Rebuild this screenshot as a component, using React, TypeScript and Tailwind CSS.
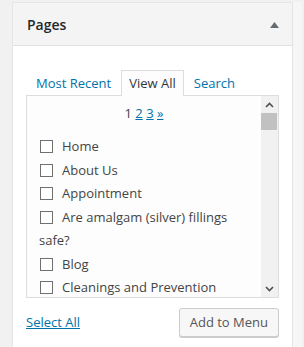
import React from 'react';

const pages = [
  'Home',
  'About Us',
  'Appointment',
  'Are amalgam (silver) fillings safe?',
  'Blog',
  'Cleanings and Prevention',
];

function ChevronUp() {
  return (
    <svg width="9" height="6" viewBox="0 0 9 6" fill="none">
      <path d="M1 5 L4.5 1.5 L8 5" stroke="#505050" strokeWidth="1.6" />
    </svg>
  );
}

function ChevronDown() {
  return (
    <svg width="9" height="6" viewBox="0 0 9 6" fill="none">
      <path d="M1 1 L4.5 4.5 L8 1" stroke="#505050" strokeWidth="1.6" />
    </svg>
  );
}

export default function App() {
  return (
    <div
      className="flex min-h-[347px] w-[304px] overflow-hidden bg-[#f1f1f1] pt-[2px] pl-[12px] text-[13px] text-[#444]"
      style={{ fontFamily: '"Open Sans", "Noto Sans", sans-serif' }}
    >
      <div className="w-[281px] shrink-0 self-start border border-[#e5e5e5] bg-white shadow-[0_1px_1px_rgba(0,0,0,0.04)]">
        {/* header */}
        <div className="flex h-[43px] items-center justify-between border-b border-[#e1e1e1] bg-[#f4f4f4] pl-[14px] pr-[13px]">
          <h3 className="text-[14px] font-semibold leading-[21px] text-[#23282d]">Pages</h3>
          <svg width="9" height="6" viewBox="0 0 9 6" className="mt-[1px]">
            <polygon points="4.5,0 9,6 0,6" fill="#666b70" />
          </svg>
        </div>

        <div className="px-[13px] pt-[24px] pb-[12px]">
          {/* tabs */}
          <ul className="ml-[2px] flex gap-[2px] leading-[18px]">
            <li className="border border-b-0 border-transparent px-[7px] pt-[3px] pb-[3px] text-[#0073aa]">Most Recent</li>
            <li className="relative -mb-px border border-b-0 border-[#dddddd] bg-[#fdfdfd] px-[7px] pt-[3px] pb-[4px] text-[#32373c]">
              View All
            </li>
            <li className="border border-b-0 border-transparent px-[7px] pt-[3px] pb-[3px] text-[#0073aa]">Search</li>
          </ul>

          {/* list panel */}
          <div className="flex h-[203px] border border-[#dddddd] bg-[#fdfdfd]">
            <div className="min-w-0 flex-1 overflow-hidden">
              <div className="mt-[6px] text-center leading-[23px]">
                <span className="text-[#444]">1</span>{' '}
                <a className="text-[#0073aa] underline">2</a>{' '}
                <a className="text-[#0073aa] underline">3</a>{' '}
                <a className="text-[#0073aa] underline">»</a>
              </div>
              <ul className="mt-[10px] pl-[12px] pr-[10px] leading-[23.5px]">
                {pages.map((p) => (
                  <li key={p}>
                    <label className="block">
                      <input
                        type="checkbox"
                        className="ml-[1px] mr-[9px] inline-block h-[13px] w-[13px] appearance-none border border-[#707070] bg-white align-[-2px]"
                      />
                      {p}
                    </label>
                  </li>
                ))}
              </ul>
            </div>
            {/* scrollbar */}
            <div className="flex w-[17px] shrink-0 flex-col bg-[#f1f1f1]">
              <div className="flex h-[17px] items-center justify-center">
                <ChevronUp />
              </div>
              <div className="mr-px h-[17px] bg-[#c1c1c1]" />
              <div className="flex-1" />
              <div className="flex h-[17px] items-center justify-center">
                <ChevronDown />
              </div>
            </div>
          </div>

          {/* controls */}
          <div className="mt-[10px] flex items-center justify-between">
            <a className="text-[#0073aa] underline leading-[19px]">Select All</a>
            <button className="h-[29px] rounded-[3px] border border-[#cccccc] bg-[#f7f7f7] px-[10px] leading-[27px] text-[#555] shadow-[0_1px_0_#cccccc]">
              Add to Menu
            </button>
          </div>
        </div>
      </div>
      <div className="h-[347px] w-[9px] shrink-0 bg-[#f6f6f6]" />
    </div>
  );
}
